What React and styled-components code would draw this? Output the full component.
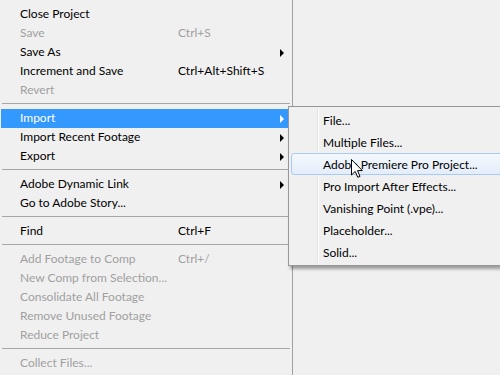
import React from 'react';
import styled, { createGlobalStyle } from 'styled-components';

const GlobalStyle = createGlobalStyle`
	html, body {
		margin: 0;
		padding: 0;
		width: 500px;
		height: 375px;
		overflow: hidden;
		background: #f0f0f0;
	}
	body {
		font-family: 'Lato', 'Noto Sans', sans-serif;
		font-size: 12px;
		color: #000;
	}
`;

const Screen = styled.div`
	position: relative;
	width: 500px;
	height: 375px;
	overflow: hidden;
	background: #f0f0f0;
`;

const Menu = styled.div`
	display: flex;
	flex-direction: column;
	width: 293px;
	height: 375px;
	box-sizing: border-box;
	padding: 5px 3px 0 1px;
	border-right: 1px solid #a0a0a0;
`;

const Row = styled.div`
	display: grid;
	grid-template-columns: 158px 1fr 8px;
	align-items: center;
	height: 19px;
	line-height: 18px;
	padding: 0 4px 1px 19px;
	width: 287px;
	box-sizing: border-box;
	white-space: nowrap;
	color: ${(p) => (p.active ? '#fff' : p.disabled ? '#a0a0a0' : '#000')};
	background: ${(p) => (p.active ? '#3399ff' : 'transparent')};
`;

const Shortcut = styled.span``;

const Arrow = styled.span`
	justify-self: end;
	width: 0;
	height: 0;
	margin-top: 1px;
	border-top: 4px solid transparent;
	border-bottom: 4px solid transparent;
	border-left: 4px solid ${(p) => (p.active ? '#fff' : '#000')};
`;

const Separator = styled.div`
	padding: 3px 0 5px 1px;
	width: 288px;
	&::before {
		content: '';
		display: block;
		height: 1px;
		background: #a6a6a6;
	}
`;

const SubMenu = styled.div`
	position: absolute;
	left: 288px;
	top: 106px;
	width: 240px;
	box-sizing: border-box;
	padding: 2px;
	background: #f0f0f0;
	border: 1px solid #979797;
	box-shadow: 2px 3px 3px rgba(0, 0, 0, 0.35);
	&::before {
		content: '';
		position: absolute;
		left: 28px;
		top: 2px;
		bottom: 2px;
		width: 1px;
		background: #e2e3e3;
		border-right: 1px solid #fff;
	}
`;

const SubRow = styled.div`
	position: relative;
	height: 22px;
	line-height: 21px;
	padding-left: 31px;
	box-sizing: border-box;
	white-space: nowrap;
	color: #000;
	border: 1px solid ${(p) => (p.hover ? '#a8cbf1' : 'transparent')};
	border-radius: 3px;
	background: ${(p) =>
		p.hover ? 'linear-gradient(#f4f8fd, #e3edfa)' : 'transparent'};
`;

const Cursor = styled.svg`
	position: absolute;
	left: 351px;
	top: 159px;
	width: 12px;
	height: 19px;
`;

const items = [
	{ label: 'Close Project' },
	{ label: 'Save', shortcut: 'Ctrl+S', disabled: true },
	{ label: 'Save As', arrow: true },
	{ label: 'Increment and Save', shortcut: 'Ctrl+Alt+Shift+S' },
	{ label: 'Revert', disabled: true },
	'sep',
	{ label: 'Import', arrow: true, active: true },
	{ label: 'Import Recent Footage', arrow: true },
	{ label: 'Export', arrow: true },
	'sep',
	{ label: 'Adobe Dynamic Link', arrow: true },
	{ label: 'Go to Adobe Story...' },
	'sep',
	{ label: 'Find', shortcut: 'Ctrl+F' },
	'sep',
	{ label: 'Add Footage to Comp', shortcut: 'Ctrl+/', disabled: true },
	{ label: 'New Comp from Selection...', disabled: true },
	{ label: 'Consolidate All Footage', disabled: true },
	{ label: 'Remove Unused Footage', disabled: true },
	{ label: 'Reduce Project', disabled: true },
	'sep',
	{ label: 'Collect Files...', disabled: true },
];

const subItems = [
	'File...',
	'Multiple Files...',
	'Adobe Premiere Pro Project...',
	'Pro Import After Effects...',
	'Vanishing Point (.vpe)...',
	'Placeholder...',
	'Solid...',
];

export default function App() {
	return (
		<Screen>
			<GlobalStyle />
			<Menu>
				{items.map((item, i) =>
					item === 'sep' ? (
						<Separator key={i} />
					) : (
						<Row key={i} active={item.active} disabled={item.disabled}>
							<span>{item.label}</span>
							<Shortcut>{item.shortcut}</Shortcut>
							{item.arrow ? <Arrow active={item.active} /> : <span />}
						</Row>
					)
				)}
			</Menu>
			<SubMenu>
				{subItems.map((label, i) => (
					<SubRow key={label} hover={i === 2}>
						{label}
					</SubRow>
				))}
			</SubMenu>
			<Cursor viewBox='0 0 12 19'>
				<path
					d='M0.5 0.5 L0.5 16 L4.2 12.4 L6.8 18.3 L9 17.4 L6.5 11.6 L11.3 11.6 Z'
					fill='#fff'
					stroke='#000'
					strokeWidth='1'
					strokeLinejoin='miter'
				/>
			</Cursor>
		</Screen>
	);
}
